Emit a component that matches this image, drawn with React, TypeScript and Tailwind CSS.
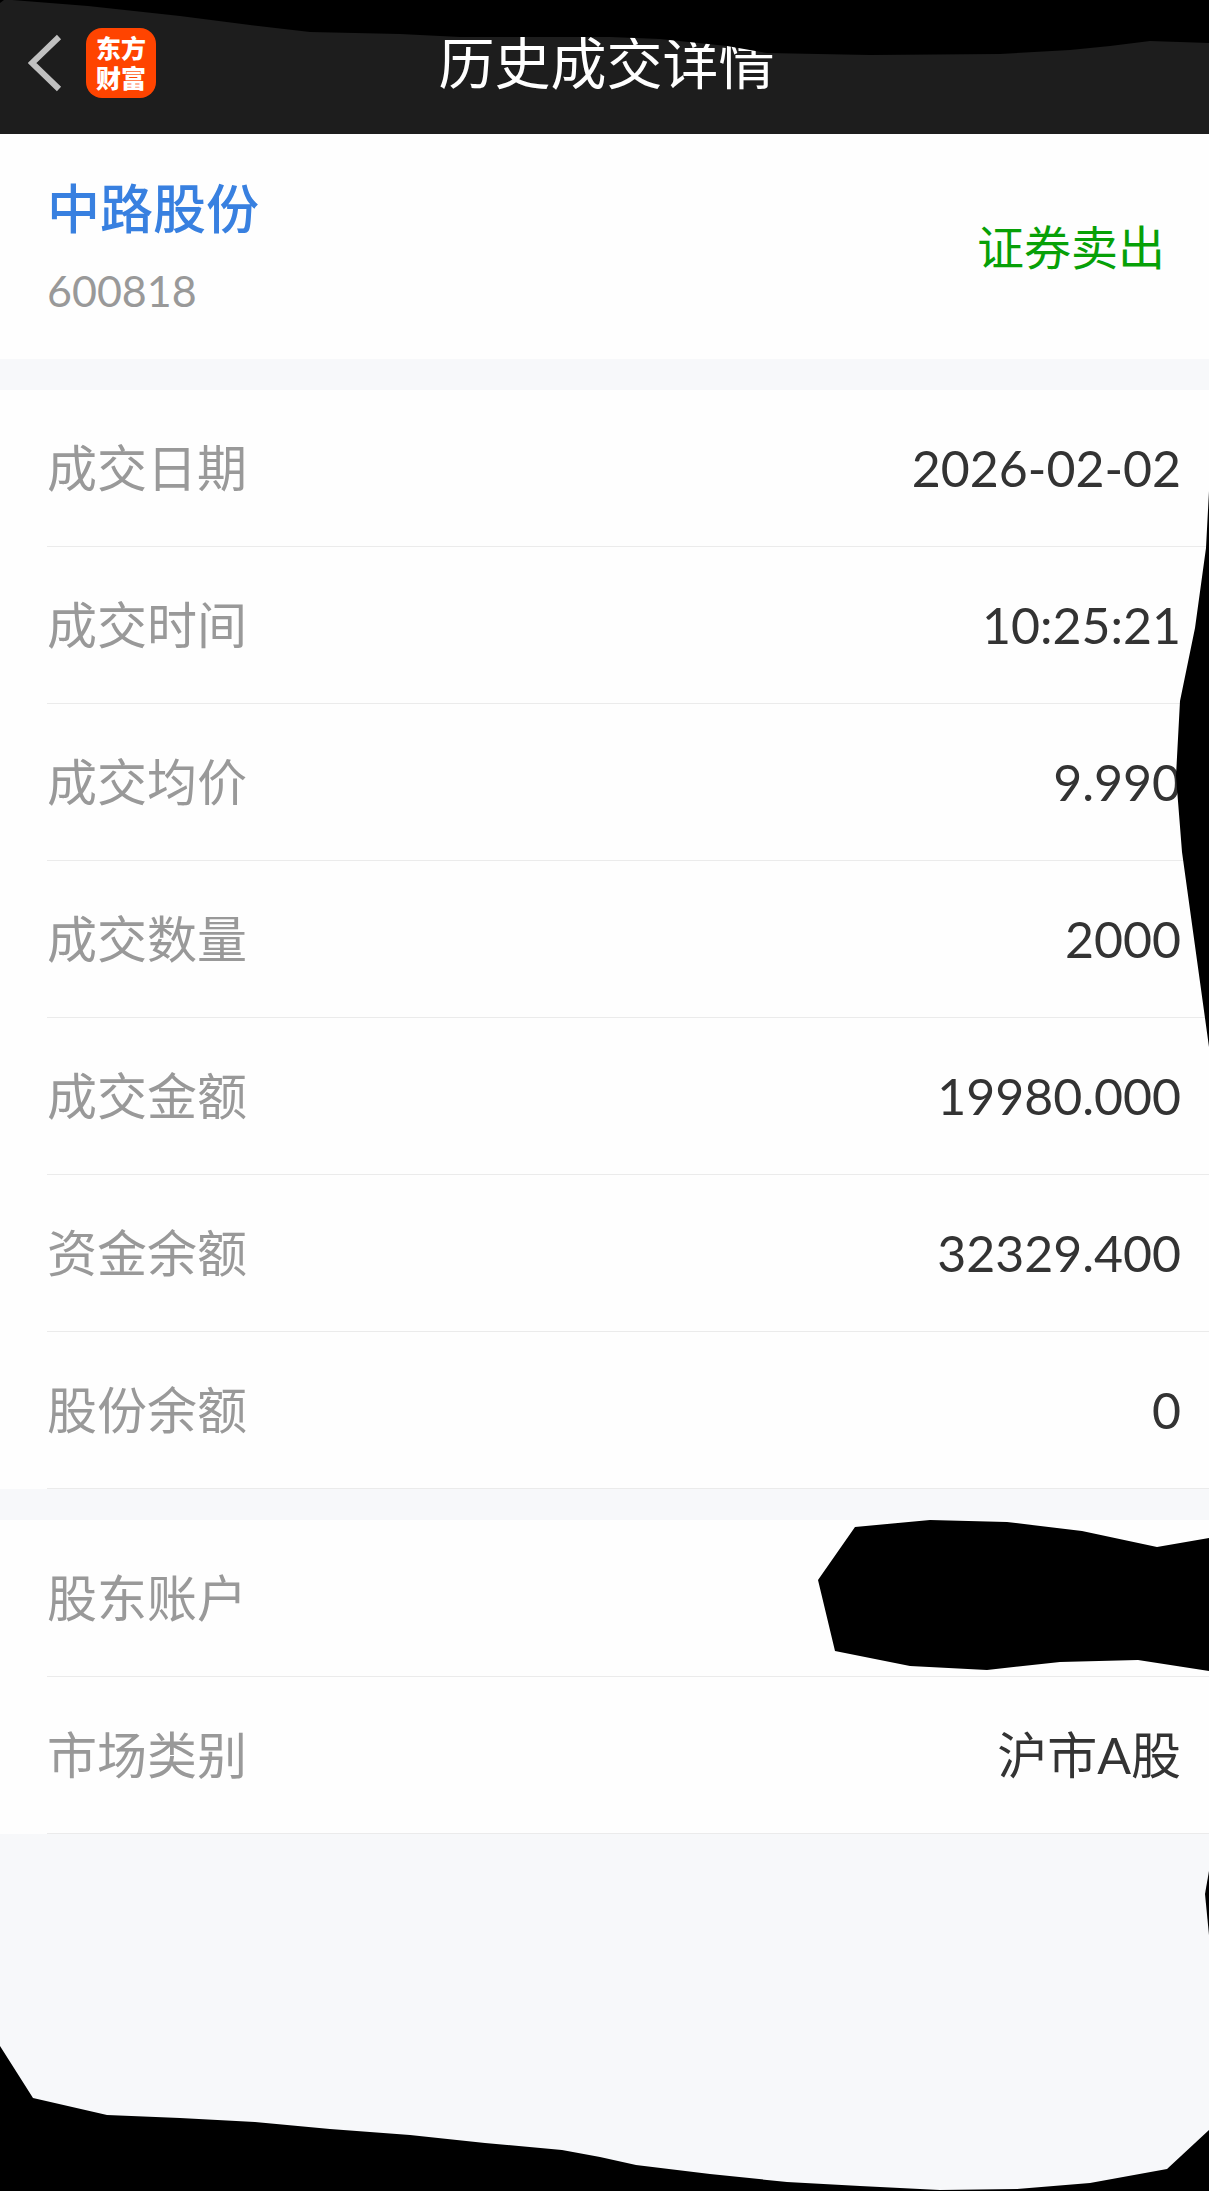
type Item = { label: string; value: string; hidden?: boolean };

const tradeItems: Item[] = [
  { label: "成交日期", value: "2026-02-02" },
  { label: "成交时间", value: "10:25:21" },
  { label: "成交均价", value: "9.990" },
  { label: "成交数量", value: "2000" },
  { label: "成交金额", value: "19980.000" },
  { label: "资金余额", value: "32329.400" },
  { label: "股份余额", value: "0" },
];

const accountItems: Item[] = [
  { label: "股东账户", value: "", hidden: true },
  { label: "市场类别", value: "沪市A股" },
];

function BackIcon() {
  return (
    <svg viewBox="0 0 34 58" className="w-[34px] h-[58px]" aria-hidden="true">
      <path
        d="M31 3 L4 29 L31 55"
        fill="none"
        stroke="#c0c0c0"
        strokeWidth="6"
      />
    </svg>
  );
}

function AppBadge() {
  return (
    <div className="w-[70px] h-[70px] rounded-2xl bg-[#ff4400] text-white text-[25px] leading-[30px] font-black flex flex-col items-center justify-center">
      <span>东方</span>
      <span>财富</span>
    </div>
  );
}

// black marker stroke over private parts of the page
function Marker({
  box,
  points,
  className,
}: {
  box: string;
  points: string;
  className: string;
}) {
  return (
    <svg
      viewBox={box}
      preserveAspectRatio="none"
      className={`absolute pointer-events-none ${className}`}
      aria-hidden="true"
    >
      <polygon points={points} fill="#000" />
    </svg>
  );
}

function DetailRow({ label, value, hidden }: Item) {
  return (
    <div className="relative pl-[47px] bg-[#fefefe]">
      <div className="flex items-center justify-between h-[157px] pr-7 border-b border-[#ebebeb] text-[50px] leading-[72px]">
        <dt className="text-[#999999]">{label}</dt>
        <dd className="text-[#333333]">{value}</dd>
      </div>
      {hidden && (
        <Marker
          box="0 0 392 152"
          points="1,60 38,7 113,0 190,2 265,11 340,27 392,18 392,151 321,140 243,142 170,150 93,146 18,131"
          className="right-0 top-0 w-[392px] h-[152px]"
        />
      )}
    </div>
  );
}

export default function App() {
  return (
    <div className="relative min-h-screen flex flex-col bg-[#f7f8fa] font-['Lato','Noto_Sans_CJK_SC',sans-serif]">
      <header className="relative grid grid-cols-[1fr_auto_1fr] items-center h-[134px] pl-7 pr-6 pb-2 bg-[#1d1d1d]">
        <div className="flex items-center gap-6">
          <button type="button" aria-label="返回">
            <BackIcon />
          </button>
          <AppBadge />
        </div>
        <h1 className="text-white text-[56px] leading-[80px]">历史成交详情</h1>
        <Marker
          box="0 0 1209 56"
          points="0,0 0,3 4,0 12,0 88,6 180,16 250,25 310,32 400,34 460,37 610,37 660,39 727,46 767,53 870,55 1000,54 1070,50 1110,46 1150,41 1209,43 1209,0"
          className="left-0 top-0 w-full h-14"
        />
      </header>

      <main className="flex-1 flex flex-col gap-[31px]">
        <section className="flex items-center justify-between h-[225px] pl-[47px] pr-11 bg-[#fefefe]">
          <div className="flex flex-col gap-2 pt-1">
            <h2 className="text-[#3880e0] text-[53px] leading-[76px] font-medium">
              中路股份
            </h2>
            <p className="text-[#999999] text-[43px] leading-[72px]">600818</p>
          </div>
          <p className="text-[#07a007] text-[47px] leading-[68px]">证券卖出</p>
        </section>

        <dl className="relative">
          {tradeItems.map((item) => (
            <DetailRow key={item.label} {...item} />
          ))}
          <Marker
            box="0 0 34 556"
            points="34,0 31,57 20,137 5,210 1,285 7,361 34,556"
            className="right-0 top-[101px] w-[34px] h-[556px]"
          />
        </dl>

        <dl>
          {accountItems.map((item) => (
            <DetailRow key={item.label} {...item} />
          ))}
        </dl>
      </main>

      <Marker
        box="0 0 4 64"
        points="4,0 0,23 4,64"
        className="right-0 bottom-[256px] w-1 h-16"
      />
      <Marker
        box="0 0 1209 146"
        points="0,1 33,53 107,70 180,73 255,77 330,84 410,90 485,98 562,105 600,112 636,120 710,129 787,137 860,141 940,145 1017,144 1090,138 1167,124 1209,85 1209,146 0,146"
        className="left-0 bottom-0 w-full h-[146px]"
      />
    </div>
  );
}
